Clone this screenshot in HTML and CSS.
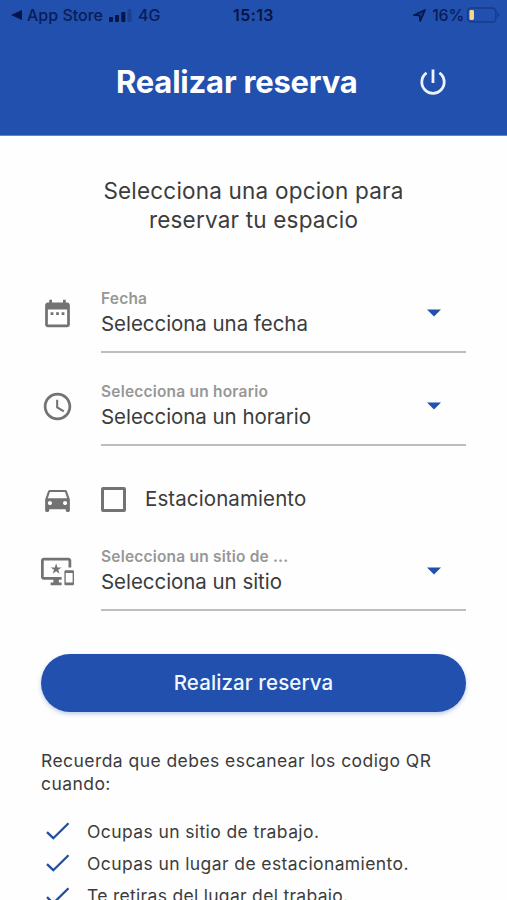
FILE: index.html
```html
<!DOCTYPE html>
<html lang="es">
<head>
<meta charset="utf-8">
<title>Realizar reserva</title>
<link rel="stylesheet" href="styles.css">
</head>
<body>
<header class="header">
  <div class="status">
    <div class="status-left">
      <svg class="back" viewBox="0 0 11 10"><path d="M0 5 11 0v10z"/></svg>
      <span class="store">App Store</span>
      <svg class="signal" viewBox="0 0 23 13"><rect x="0" y="8" width="4" height="5" rx="1"/><rect x="6" y="6" width="4" height="7" rx="1"/><rect x="12.3" y="3" width="4" height="10" rx="1"/><rect class="dim" x="18.5" y="0" width="4" height="13" rx="1"/></svg>
      <span class="net">4G</span>
    </div>
    <span class="time">15:13</span>
    <div class="status-right">
      <svg class="location" viewBox="0 0 13 13"><path d="M1 6.2 12 1 7.2 12 6.6 6.5z"/></svg>
      <span class="percent">16%</span>
      <svg class="battery" viewBox="0 0 34 16"><rect class="shell" x=".75" y=".75" width="29" height="14.5" rx="3.5"/><rect class="charge" x="2.5" y="2.8" width="4.7" height="10.4" rx="1.5"/><path class="tip" d="M31.5 5.5c2 .7 2 4.3 0 5z"/></svg>
    </div>
  </div>
  <div class="titlebar">
    <h1 class="title">Realizar reserva</h1>
    <svg class="power" viewBox="0 0 28 28"><path d="M14 1.5V15M7.6 4.9a11.2 11.2 0 1 0 12.8 0"/></svg>
  </div>
</header>
<main class="content">
  <p class="intro">Selecciona una opcion para<br>reservar tu espacio</p>
  <div class="row">
    <svg class="icon" viewBox="0 0 24 24"><path d="M9 11H7v2h2v-2zm4 0h-2v2h2v-2zm4 0h-2v2h2v-2zm2-7h-1V2h-2v2H8V2H6v2H5c-1.11 0-1.99.9-1.99 2L3 20c0 1.1.89 2 2 2h14c1.1 0 2-.9 2-2V6c0-1.1-.9-2-2-2zm0 16H5V9h14v11z"/></svg>
    <div class="field">
      <div class="texts"><span class="label">Fecha</span><span class="value">Selecciona una fecha</span></div>
      <svg class="caret" viewBox="0 0 14 8"><path d="M0 .5h14L7 7.5z"/></svg>
    </div>
  </div>
  <div class="row">
    <svg class="icon" viewBox="0 0 24 24"><path d="M11.99 2C6.47 2 2 6.48 2 12s4.47 10 9.99 10C17.52 22 22 17.52 22 12S17.52 2 11.99 2zM12 20c-4.42 0-8-3.58-8-8s3.58-8 8-8 8 3.58 8 8-3.58 8-8 8zm.5-13H11v6l5.25 3.15.75-1.23-4.5-2.67z"/></svg>
    <div class="field">
      <div class="texts"><span class="label">Selecciona un horario</span><span class="value">Selecciona un horario</span></div>
      <svg class="caret" viewBox="0 0 14 8"><path d="M0 .5h14L7 7.5z"/></svg>
    </div>
  </div>
  <div class="row parking">
    <svg class="icon" viewBox="0 0 24 24"><path d="M18.92 6.01C18.72 5.42 18.16 5 17.5 5h-11c-.66 0-1.21.42-1.42 1.01L3 12v8c0 .55.45 1 1 1h1c.55 0 1-.45 1-1v-1h12v1c0 .55.45 1 1 1h1c.55 0 1-.45 1-1v-8l-2.08-5.99zM6.5 16c-.83 0-1.5-.67-1.5-1.5S5.67 13 6.5 13s1.5.67 1.5 1.5S7.33 16 6.5 16zm11 0c-.83 0-1.5-.67-1.5-1.5s.67-1.5 1.5-1.5 1.5.67 1.5 1.5-.67 1.5-1.5 1.5zM5 11l1.5-4.5h11L19 11H5z"/></svg>
    <span class="checkbox"></span>
    <span class="check-label">Estacionamiento</span>
  </div>
  <div class="row">
    <svg class="icon" viewBox="0 0 24 24"><path d="M23 11.01L18 11c-.55 0-1 .45-1 1v9c0 .55.45 1 1 1h5c.55 0 1-.45 1-1v-9c0-.55-.45-.99-1-.99zM23 20h-5v-7h5v7zM20 2H2C.89 2 0 2.89 0 4v12c0 1.1.89 2 2 2h7v2H7v2h8v-2h-2v-2h2v-2H2V4h18v5h2V4c0-1.11-.9-2-2-2zm-8.03 7L11 6l-.97 3H7l2.47 1.76-.94 2.91 2.47-1.8 2.47 1.8-.94-2.91L15 9h-3.03z"/></svg>
    <div class="field">
      <div class="texts"><span class="label">Selecciona un sitio de ...</span><span class="value">Selecciona un sitio</span></div>
      <svg class="caret" viewBox="0 0 14 8"><path d="M0 .5h14L7 7.5z"/></svg>
    </div>
  </div>
  <button class="submit">Realizar reserva</button>
  <p class="note">Recuerda que debes escanear los codigo QR<br>cuando:</p>
  <ul class="list">
    <li><svg class="tick" viewBox="0 0 24 18"><path d="M1 10.2 7.3 16.2 22.5 1.2"/></svg><span>Ocupas un sitio de trabajo.</span></li>
    <li><svg class="tick" viewBox="0 0 24 18"><path d="M1 10.2 7.3 16.2 22.5 1.2"/></svg><span>Ocupas un lugar de estacionamiento.</span></li>
    <li><svg class="tick" viewBox="0 0 24 18"><path d="M1 10.2 7.3 16.2 22.5 1.2"/></svg><span>Te retiras del lugar del trabajo.</span></li>
  </ul>
</main>
</body>
</html>
```
FILE: styles.css
```css
* { box-sizing: border-box; }
html, body { height: 900px; overflow: hidden; }
body { margin: 0; background: #fefefe; color: #3c3c3c; font-family: Inter, "Liberation Sans", sans-serif; }
svg { display: block; flex: none; overflow: visible; }
.header { height: 136px; background: #2150ae; border-bottom: 1px solid #6784bd; }
.status { display: grid; grid-template-columns: 1fr auto 1fr; align-items: center; height: 30px; padding: 0 9px 0 11px; color: #091d59; font-size: 16px; font-weight: 500; line-height: 20px; white-space: nowrap; }
.status-left, .status-right { display: flex; align-items: center; }
.status-right { justify-content: flex-end; }
.status svg { fill: #071447; }
.back { width: 11px; height: 10px; margin-right: 5px; }
.signal { width: 23px; height: 13px; margin: 0 6px; }
.signal .dim { fill: #1b3f94; }
.time { margin-right: 2px; font-weight: 600; color: #07143f; letter-spacing: .4px; }
.location { width: 13px; height: 13px; margin-right: 6px; }
.status .location path { fill: #071447; fill-opacity: .35; stroke: #071447; stroke-width: 1.7; stroke-linejoin: round; }
.percent { letter-spacing: -.3px; }
.battery { width: 33px; height: 16px; margin: 0 -2px 0 3px; }
.status .shell { fill: none; stroke: #173b8a; stroke-width: 1.5; }
.status .charge { fill: #f5d98a; }
.status .tip { fill: #173b8a; }
.titlebar { display: flex; align-items: center; height: 104px; padding-left: 116px; }
.title { width: 241px; margin: 0; color: #fff; font-size: 31px; line-height: 40px; font-weight: 700; letter-spacing: -.2px; white-space: nowrap; }
.power { width: 28px; height: 28px; margin-left: 62px; }
.power path { fill: none; stroke: #eef4ff; stroke-width: 2.8; }
.content { padding: 41px 41px 0; }
.intro { margin: 0; text-align: center; font-size: 22.5px; line-height: 28.5px; letter-spacing: .2px; }
.row { display: flex; align-items: center; height: 79px; }
.intro + .row { margin-top: 40px; }
.row + .row { margin-top: 14px; }
.icon { width: 33px; height: 33px; margin-right: 27px; fill: #737373; }
.field { display: flex; align-items: center; justify-content: space-between; width: 365px; height: 79px; padding: 1px 25px 0 0; border-bottom: 2px solid #bdbdbd; }
.texts { display: flex; flex-direction: column; padding-top: 2px; }
.label { font-size: 15.5px; line-height: 20px; font-weight: 600; color: #979797; letter-spacing: .2px; }
.value { font-size: 20.5px; line-height: 30px; letter-spacing: -.05px; }
.caret { width: 14px; height: 8px; fill: #2150ae; }
.row + .row.parking { height: 50px; margin-top: 28px; }
.row.parking + .row { margin-top: 8px; }
.checkbox { width: 25px; height: 25px; border: 3px solid #737373; border-radius: 2px; }
.check-label { margin-left: 19px; font-size: 20.5px; line-height: 28px; letter-spacing: .1px; }
.submit { display: block; width: 425px; height: 58px; margin-top: 43px; padding: 0; border: 0; border-radius: 29px; background: #2150ae; box-shadow: 0 2px 4px #7d9ad080; color: #f2f7ff; font: 500 20.5px/28px Inter, "Liberation Sans", sans-serif; letter-spacing: .1px; }
.note { margin: 37px 0 0; font-size: 17.5px; line-height: 23px; letter-spacing: .44px; white-space: nowrap; }
.list { margin: 20px 0 0; padding: 0; list-style: none; }
.list li { display: flex; align-items: center; height: 32.3px; padding-left: 5px; font-size: 17.5px; letter-spacing: .4px; white-space: nowrap; }
.list li:last-child { letter-spacing: .3px; }
.tick { width: 24px; height: 18px; margin-right: 17px; }
.tick path { fill: none; stroke: #264e98; stroke-width: 2.3; }
```
